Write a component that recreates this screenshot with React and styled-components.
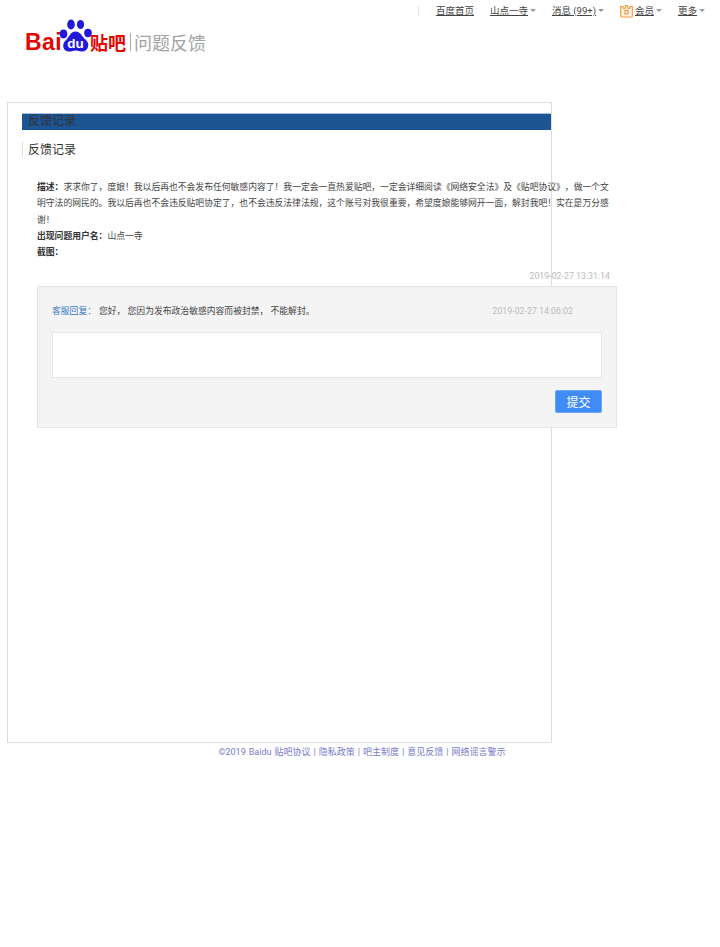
import styled, { createGlobalStyle } from 'styled-components';

const GlobalStyle = createGlobalStyle`
  body {
    margin: 0;
    background: #fff;
    color: #333;
    font-family: Roboto, "Noto Sans CJK SC", sans-serif;
    font-size: 10px;
  }
`;

function CrownIcon() {
  return (
    <svg width="13" height="14" viewBox="0 0 13 14" fill="none">
      <path d="M0.7 2.5 L0.7 12 Q0.7 13 1.7 13 L11.3 13 Q12.3 13 12.3 12 L12.3 2.5 L10 2.5 L9.5 4.5 L8 4.5 L7.5 1.5 L5.5 1.5 L5 4.5 L3.5 4.5 L3 2.5 Z" stroke="#f39b3c" strokeWidth="1.2" fill="#fff6ea" />
      <rect x="5" y="6.4" width="3" height="3.6" stroke="#e9893a" strokeWidth="1" />
    </svg>
  );
}

function Paw() {
  return (
    <svg width="34" height="34" viewBox="0 0 34 34">
      <g fill="#2319dc">
        <ellipse cx="4.5" cy="15" rx="3.8" ry="4.4" />
        <ellipse cx="12" cy="5.5" rx="3.8" ry="5" />
        <ellipse cx="21.5" cy="5.5" rx="3.6" ry="4.6" />
        <ellipse cx="29" cy="14" rx="3.8" ry="4.2" />
        <path d="M16.5 12.5 C22 12.5 23 18 27 21 C31.5 25 29 32.5 23 32.5 C20 32.5 19 31.5 16.5 31.5 C14 31.5 12.5 33 9 32.5 C4 32 2.5 25 6.5 21.5 C10.5 18.5 11 12.5 16.5 12.5 Z" />
      </g>
      <text x="16.5" y="29" textAnchor="middle" fontFamily="Liberation Sans, sans-serif" fontWeight="700" fontSize="13.5" fill="#fff">du</text>
    </svg>
  );
}

function NavLink({ caret, icon, children }) {
  return (
    <NavItem>
      {icon}
      <NavText>{children}</NavText>
      {caret && <Caret />}
    </NavItem>
  );
}

export default function App() {
  return (
    <>
      <GlobalStyle />
      <TopNav>
        <NavDivider />
        <NavLink>百度首页</NavLink>
        <NavLink caret>山点一寺</NavLink>
        <NavLink caret>消息 (99+)</NavLink>
        <NavLink caret icon={<CrownIcon />}>会员</NavLink>
        <NavLink caret>更多</NavLink>
      </TopNav>
      <LogoRow>
        <LogoWord>Bai</LogoWord>
        <Paw />
        <LogoTieba>贴吧</LogoTieba>
        <LogoLine />
        <LogoTitle>问题反馈</LogoTitle>
      </LogoRow>
      <Panel>
        <BlueBar>反馈记录</BlueBar>
        <SubTitle>反馈记录</SubTitle>
        <Feedback>
          <Line>
            <strong>描述：</strong>求求你了，度娘！我以后再也不会发布任何敏感内容了！我一定会一直热爱贴吧，一定会详细阅读《网络安全法》及《贴吧协议》，做一个文明守法的网民的。我以后再也不会违反贴吧协定了，也不会违反法律法规，这个账号对我很重要，希望度娘能够网开一面，解封我吧！实在是万分感谢！
          </Line>
          <Line><strong>出现问题用户名：</strong>山点一寺</Line>
          <Line><strong>截图：</strong></Line>
          <FeedbackDate>2019-02-27 13:31:14</FeedbackDate>
        </Feedback>
        <ReplyBox>
          <ReplyRow>
            <ReplyText><ReplyLabel>客服回复：</ReplyLabel>您好， 您因为发布政治敏感内容而被封禁， 不能解封。</ReplyText>
            <ReplyDate>2019-02-27 14:06:02</ReplyDate>
          </ReplyRow>
          <ReplyInput />
          <ReplyActions>
            <SubmitButton>提交</SubmitButton>
          </ReplyActions>
        </ReplyBox>
      </Panel>
      <Footer>©2019 Baidu 贴吧协议 | 隐私政策 | 吧主制度 | 意见反馈 | 网络谣言警示</Footer>
    </>
  );
}

const TopNav = styled.nav`
  display: flex;
  justify-content: flex-end;
  align-items: center;
  height: 21px;
  padding-right: 15px;
  gap: 16px;
  font-size: 9.5px;
`;

const NavDivider = styled.span`
  width: 1px;
  height: 10px;
  background: #e6e6e6;
  margin-right: 1px;
`;

const NavItem = styled.span`
  display: flex;
  align-items: center;
  gap: 2px;
  color: #444;
`;

const NavText = styled.span`
  text-decoration: underline;
  line-height: 14px;
`;

const Caret = styled.i`
  width: 0;
  height: 0;
  border-left: 3px solid transparent;
  border-right: 3px solid transparent;
  border-top: 3px solid #999;
`;

const LogoRow = styled.div`
  display: flex;
  align-items: flex-end;
  height: 32px;
  padding-left: 25px;
`;

const LogoWord = styled.span`
  font-family: "Liberation Sans", sans-serif;
  font-weight: 700;
  font-size: 23px;
  line-height: 20px;
  letter-spacing: 0.4px;
  color: #e10601;
  margin-right: -3px;
  margin-bottom: 1px;
`;

const LogoTieba = styled.span`
  font-family: "Noto Sans CJK SC", sans-serif;
  font-weight: 700;
  font-size: 18px;
  line-height: 20px;
  color: #e10601;
  margin-left: -3px;
  margin-bottom: 1px;
`;

const LogoLine = styled.span`
  width: 1px;
  height: 18px;
  margin: 0 3px 2px 4px;
  background: #aaa;
`;

const LogoTitle = styled.span`
  font-family: "Noto Sans CJK SC", sans-serif;
  font-size: 18px;
  line-height: 20px;
  color: #a3a3a3;
  margin-bottom: 1px;
`;

const Panel = styled.main`
  box-sizing: border-box;
  width: 545px;
  height: 641px;
  margin: 49px 0 0 7px;
  padding-top: 10px;
  border: 1px solid #ddd;
`;

const BlueBar = styled.h2`
  margin: 0 0 0 14px;
  height: 16px;
  padding-left: 6px;
  background: #1c5494;
  border-top: 1px solid #a9bdd6;
  box-sizing: content-box;
  color: #333;
  font-size: 12px;
  font-weight: 400;
  line-height: 14px;
`;

const SubTitle = styled.h3`
  margin: 12px 0 0 14px;
  height: 15px;
  padding-left: 5px;
  border-left: 1px solid #ddd;
  color: #333;
  font-size: 12px;
  font-weight: 400;
  line-height: 17px;
`;

const Feedback = styled.section`
  width: 573px;
  margin: 22px 0 0 29px;
  line-height: 16.3px;
  font-size: 8.8px;
  text-spacing-trim: space-all;
  color: #444;
  strong {
    font-weight: 700;
    color: #333;
  }
`;

const Line = styled.div``;

const FeedbackDate = styled.div`
  margin-top: 9px;
  text-align: right;
  color: #bbb;
  font-size: 8.8px;
  line-height: 14px;
`;

const ReplyBox = styled.section`
  box-sizing: border-box;
  width: 580px;
  height: 142px;
  margin: 3px 0 0 29px;
  padding: 17px 14px 0;
  background: #f4f4f4;
  border: 1px solid #e4e4e4;
`;

const ReplyRow = styled.div`
  display: flex;
  justify-content: space-between;
  line-height: 14px;
  padding-right: 29px;
  font-size: 8.8px;
`;

const ReplyText = styled.span`
  color: #444;
`;

const ReplyLabel = styled.span`
  color: #3a74c4;
  margin-right: 3px;
`;

const ReplyDate = styled.span`
  color: #bbb;
`;

const ReplyInput = styled.div`
  box-sizing: border-box;
  height: 46px;
  margin-top: 14px;
  background: #fff;
  border: 1px solid #e6e6e6;
`;

const ReplyActions = styled.div`
  display: flex;
  justify-content: flex-end;
  margin-top: 12px;
`;

const SubmitButton = styled.button`
  width: 47px;
  height: 23px;
  padding: 0;
  background: #3f8bf8;
  border: 1px solid #6ea6f5;
  border-radius: 2px;
  color: #fff;
  font-family: inherit;
  font-size: 12px;
`;

const Footer = styled.footer`
  margin-top: 2px;
  text-align: center;
  color: #7a7acb;
  font-size: 9px;
  word-spacing: 0.8px;
  line-height: 14px;
  padding-left: 4px;
`;
